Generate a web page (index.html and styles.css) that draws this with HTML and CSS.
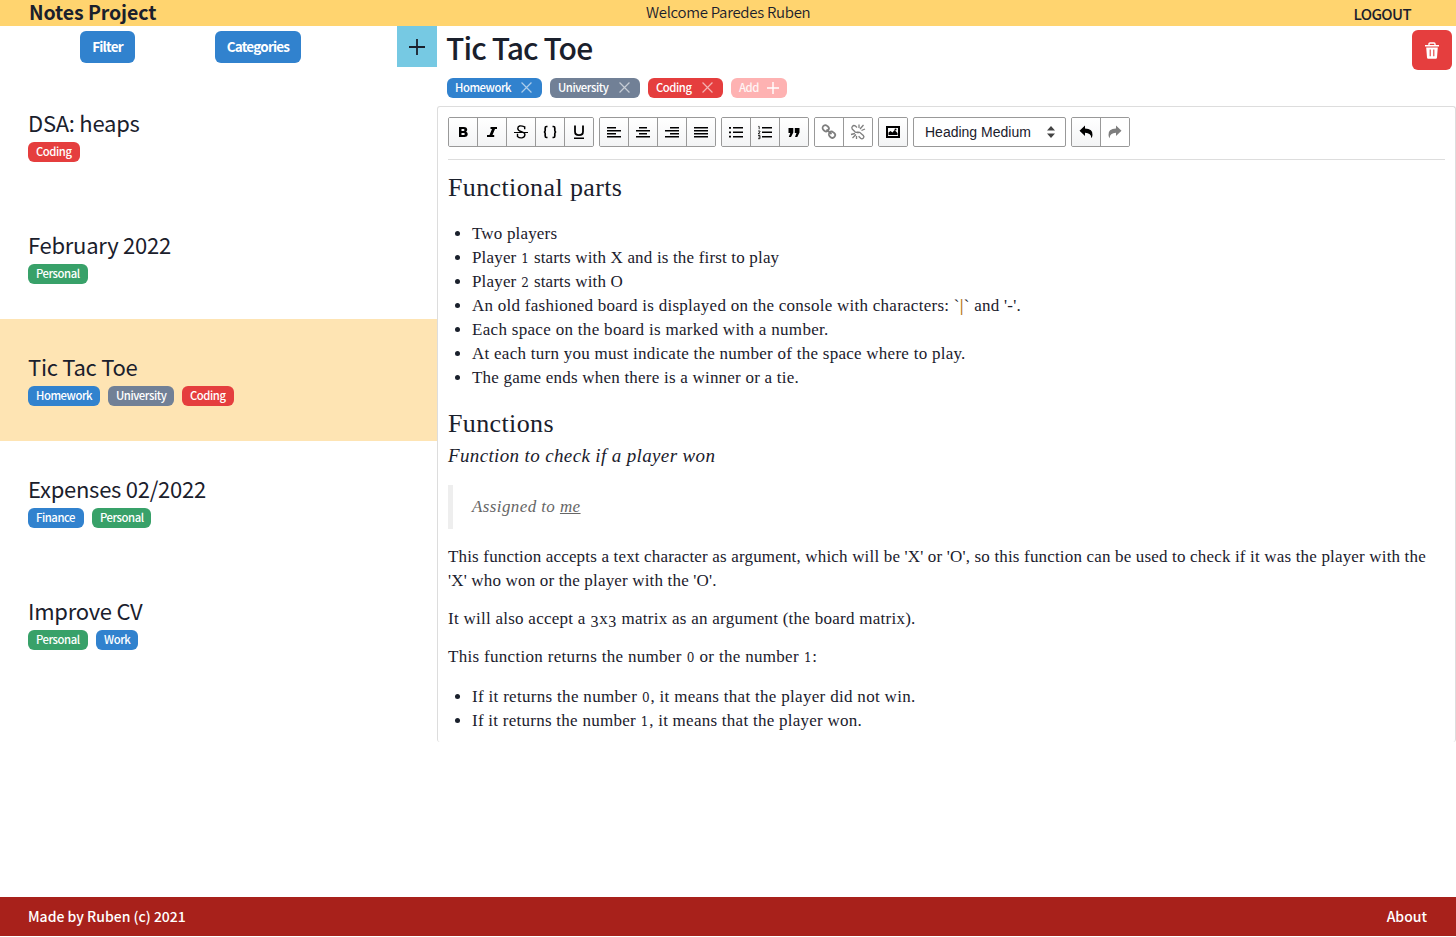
FILE: index.html
```html
<!DOCTYPE html>
<html lang="en">
<head>
<meta charset="utf-8">
<title>Notes Project</title>
<link rel="stylesheet" href="styles.css">
</head>
<body>
<div class="app">
  <header class="header">
    <h1 class="brand">Notes Project</h1>
    <span class="welcome">Welcome Paredes Ruben</span>
    <a class="logout">LOGOUT</a>
  </header>
  <div class="main">
    <aside class="sidebar">
      <div class="actions">
        <button class="btn filter">Filter</button>
        <button class="btn categories">Categories</button>
        <button class="new" aria-label="New note"><svg width="16" height="16" viewBox="0 0 16 16" stroke="#1a202c" stroke-width="1.8"><path d="M8 0v16M0 8h16"/></svg></button>
      </div>
      <ul class="notes">
        <li class="note"><h3 class="note-title">DSA: heaps</h3><div class="tags"><span class="tag red w-cod">Coding</span></div></li>
        <li class="note"><h3 class="note-title">February 2022</h3><div class="tags"><span class="tag green w-per">Personal</span></div></li>
        <li class="note active"><h3 class="note-title">Tic Tac Toe</h3><div class="tags"><span class="tag blue w-hom">Homework</span><span class="tag gray w-uni">University</span><span class="tag red w-cod">Coding</span></div></li>
        <li class="note"><h3 class="note-title">Expenses 02/2022</h3><div class="tags"><span class="tag blue w-fin">Finance</span><span class="tag green w-per last">Personal</span></div></li>
        <li class="note"><h3 class="note-title">Improve CV</h3><div class="tags"><span class="tag green w-per">Personal</span><span class="tag blue w-wor">Work</span></div></li>
      </ul>
    </aside>
    <section class="detail">
      <div class="detail-head">
        <h2 class="title">Tic Tac Toe</h2>
        <button class="delete" aria-label="Delete"><svg width="14" height="17" viewBox="0 0 14 17"><path d="M4 3.500V2q0-1 1-1h4q1 0 1 1v1.500" fill="none" stroke="#fff" stroke-width="1.400"/><path d="M0 3h14v1.500H0zM1.200 5.500h11.600L12 15.500q-.1 1.200-1.200 1.200H3.200Q2.100 16.700 2 15.500z" fill="#fff"/><path d="M5.200 7.500v6.800M8.800 7.500v6.800" stroke="#e53e3e" stroke-width="1.100"/></svg></button>
      </div>
      <div class="tags edit">
        <span class="tag blue e-hom">Homework<svg class="x" viewBox="0 0 10 10"><path d="M.5.5l9 9M9.500.5l-9 9"/></svg></span>
        <span class="tag gray e-uni">University<svg class="x" viewBox="0 0 10 10"><path d="M.5.5l9 9M9.500.5l-9 9"/></svg></span>
        <span class="tag red e-cod">Coding<svg class="x" viewBox="0 0 10 10"><path d="M.5.5l9 9M9.500.5l-9 9"/></svg></span>
        <span class="tag pink e-add">Add<svg class="plus" viewBox="0 0 12 12"><path d="M6 0v12M0 6h12"/></svg></span>
      </div>
      <div class="editor">
        <div class="toolbar">
          <div class="group">
            <button class="tool"><svg viewBox="0 0 18 18"><path fill-rule="evenodd" d="M5 4h5c3.600 0 4.100 3.700 2 4.700 2.900 1.200 2 5.300-1.500 5.300H5zM7.500 6v2h2c1.300 0 1.300-2 0-2zm0 4v2h2.300c1.400 0 1.400-2 0-2z"/></svg></button>
            <button class="tool"><svg viewBox="0 0 18 18"><path d="M7.500 4H14v2h-2L9.500 12h1.700v2H4v-2h2.500L9 6H7.500z"/></svg></button>
            <button class="tool"><svg viewBox="0 0 18 18" fill="none" stroke="#000"><path stroke-width="1.400" d="M12.700 6.200V3.800Q6 1.300 5.800 5.400c0 4 7.100 2.400 7.100 6.100 0 4.300-5.400 3.900-7.400 2v-2.700"/><path stroke-width="1.100" d="M2 9.500h14"/></svg></button>
            <button class="tool"><svg viewBox="0 0 18 18" fill="none" stroke="#000" stroke-width="1.700"><path d="M6.500 3.500H5.500Q4.200 3.500 4.200 5v2.500Q4.200 9 2.800 9q1.400 0 1.400 1.500V13q0 1.500 1.300 1.500h1M11.500 3.500h1q1.300 0 1.300 1.500v2.500q0 1.500 1.400 1.500-1.400 0-1.400 1.500V13q0 1.500-1.300 1.500h-1"/></svg></button>
            <button class="tool"><svg viewBox="0 0 18 18" fill="none" stroke="#000"><path stroke-width="1.800" d="M5 2.500v6q0 3.700 4 3.700t4-3.700v-6"/><path stroke-width="1.500" d="M4 15.200h10"/></svg></button>
          </div>
          <div class="group">
            <button class="tool"><svg viewBox="0 0 18 18"><path d="M2 4h9v1.500H2zm0 3h14v1.500H2zm0 3h9v1.500H2zm0 3h14v1.500H2z"/></svg></button>
            <button class="tool"><svg viewBox="0 0 18 18"><path d="M5 4h8v1.500H5zM2 7h14v1.500H2zm3 3h8v1.500H5zm-3 3h14v1.500H2z"/></svg></button>
            <button class="tool"><svg viewBox="0 0 18 18"><path d="M7 4h9v1.500H7zM2 7h14v1.500H2zm5 3h9v1.500H7zm-5 3h14v1.500H2z"/></svg></button>
            <button class="tool"><svg viewBox="0 0 18 18"><path d="M2 4h14v1.500H2zm0 3h14v1.500H2zm0 3h14v1.500H2zm0 3h14v1.500H2z"/></svg></button>
          </div>
          <div class="group">
            <button class="tool"><svg viewBox="0 0 18 18"><path d="M6 4h10v1.500H6zm0 4.500h10V10H6zm0 4.500h10v1.500H6zM2 4h2v1.800H2zm0 4.400h2v1.800H2zm0 4.400h2v1.800H2z"/></svg></button>
            <button class="tool"><svg viewBox="0 0 18 18"><path d="M6 4h10v1.500H6zm0 4.500h10V10H6zm0 4.500h10v1.500H6z"/><path fill="none" stroke="#000" stroke-width=".8" d="M2.300 3.400h.9v2.800M2 8h2v1l-2 1.800h2.200M2 12.500h2v3.200H2M2.500 14H4"/></svg></button>
            <button class="tool"><svg viewBox="0 0 18 18"><path d="M3.500 5h4.800v4.500L6 14H3.800l1.500-4H3.500zM9.800 5h4.700v4.500L12.300 14H10l1.500-4H9.800z"/></svg></button>
          </div>
          <div class="group">
            <button class="tool off"><svg viewBox="0 0 18 18" fill="none" stroke="#000" stroke-width="1.700"><rect x="2.500" y="2.500" width="6.500" height="5.500" rx="2.700" transform="rotate(40 5.700 5.200)"/><rect x="8.800" y="9" width="6.500" height="5.500" rx="2.700" transform="rotate(40 12 11.700)"/><path d="M6.500 6.500l5 4.500"/></svg></button>
            <button class="tool off"><svg viewBox="0 0 18 18" fill="none" stroke="#000" stroke-width="1.300"><path d="M8 4.500L6.200 2.800q-1.600-.8-2.700.4-1.200 1.200-.3 2.800l3 3q1.400.9 2.600-.2M8.500 10.200q.8-1.400 2.400-.7l3.400 3q1.300 1.500.1 2.600-1.400 1.300-2.800.2l-2-2M11 6l3.500-4M12.500 7.500L16 6M10 5V1.500M2 11.500l4-1M3.500 15L7 11.500M7.500 16v-3"/></svg></button>
          </div>
          <div class="group"><button class="tool"><svg viewBox="0 0 18 18"><path fill-rule="evenodd" d="M2 3h14v12H2zm2 2v8h10V5z"/><path d="M4.500 12V9.500l2-1.500 2 1.500 2-2.500 3 3v2z"/><circle cx="11.500" cy="6.500" r="1"/></svg></button></div>
          <div class="group select">Heading Medium<svg width="8" height="12" viewBox="0 0 8 12"><path d="M0 4.500L4 0l4 4.500zM0 7.500h8L4 12z" fill="#444"/></svg></div>
          <div class="group">
            <button class="tool"><svg viewBox="0 0 18 18"><path d="M8 2.500v3q8 .1 7.500 6.500-.1 1.900-1.200 3.200Q14.300 10 8 9.800V13L2.500 7.700z"/></svg></button>
            <button class="tool off"><svg viewBox="0 0 18 18"><path d="M10 2.500v3Q2 5.600 2.500 12q.1 1.900 1.200 3.200Q3.700 10 10 9.800V13l5.500-5.300z"/></svg></button>
          </div>
        </div>
        <article class="content">
          <h4 class="heading">Functional parts</h4>
          <ul class="list">
            <li>Two players</li>
            <li>Player <span class="num">1</span> starts with X and is the first to play</li>
            <li>Player <span class="num">2</span> starts with O</li>
            <li class="looser">An old fashioned board is displayed on the console with characters: `<span class="bar">|</span>` and '-'.</li>
            <li class="loosest">Each space on the board is marked with a number.</li>
            <li class="looser">At each turn you must indicate the number of the space where to play.</li>
            <li class="loose">The game ends when there is a winner or a tie.</li>
          </ul>
          <h4 class="heading second">Functions</h4>
          <h5 class="subheading">Function to check if a player won</h5>
          <blockquote class="quote">Assigned to <u>me</u></blockquote>
          <p class="para">This function accepts a text character as argument, which will be 'X' or 'O', so this function can be used to check if it was the player with the<br>'X' who won or the player with the 'O'.</p>
          <p class="para looser">It will also accept a <span class="num low">3</span>x<span class="num low">3</span> matrix as an argument (the board matrix).</p>
          <p class="para loosest">This function returns the number <span class="num">0</span> or the number <span class="num">1</span>:</p>
          <ul class="list end">
            <li class="loosest">If it returns the number <span class="num">0</span>, it means that the player did not win.</li>
            <li class="looser">If it returns the number <span class="num">1</span>, it means that the player won.</li>
          </ul>
        </article>
      </div>
    </section>
  </div>
  <footer class="footer"><span>Made by Ruben (c) 2021</span><a>About</a></footer>
</div>
</body>
</html>
```
FILE: styles.css
```css
* { box-sizing: border-box; margin: 0; padding: 0; }
body { background: #fff; color: #1a202c; font-family: "Noto Sans CJK SC", "Noto Sans", sans-serif; font-size: 16px; overflow: hidden; }
button { border: 0; font: inherit; color: inherit; }
ul { list-style: none; }
.app { height: 936px; display: flex; flex-direction: column; }
.header { height: 26px; flex: none; background: #ffd46f; display: grid; grid-template-columns: 617px 1fr auto; padding: 0 45px 0 29px; white-space: nowrap; }
.brand { font: 700 19.5px/24px "Noto Sans CJK SC", sans-serif; letter-spacing: -.1px; }
.welcome { font-size: 15px; font-weight: 350; line-height: 24px; letter-spacing: -.3px; }
.logout { font-weight: 500; font-size: 15px; line-height: 28px; letter-spacing: -.6px; }
.main { flex: 1; display: flex; min-height: 0; }
.sidebar { width: 437px; flex: none; }
.actions { height: 49px; display: flex; align-items: flex-start; padding-left: 80px; }
.btn { margin-top: 5px; height: 32px; border-radius: 6px; background: #3182ce; color: #fff; font-weight: 700; font-size: 13.5px; line-height: 30px; letter-spacing: -.8px; text-align: center; padding-bottom: 2px; }
.filter { width: 55px; }
.categories { width: 86px; margin-left: 80px; }
.new { width: 40px; height: 41px; margin-left: auto; background: #76c9e3; display: grid; place-items: center; }
.note { height: 122px; padding: 32px 28px 0; }
.note.active { background: #fee4b3; }
.note-title { font-size: 22px; font-weight: 400; line-height: 30px; height: 35px; letter-spacing: -.26px; white-space: nowrap; }
.tags { display: flex; gap: 8px; }
.tag { height: 20px; border-radius: 6px; color: #fff; font-size: 11.3px; font-weight: 500; line-height: 19px; letter-spacing: -.45px; padding-left: 8px; white-space: nowrap; }
.blue { background: #3182ce; }
.red { background: #e53e3e; }
.green { background: #38a169; }
.gray { background: #718096; }
.pink { background: #feb2b2; }
.w-cod { width: 52px; }
.w-per { width: 60px; }
.w-per.last { width: 59px; }
.w-hom { width: 72px; }
.w-uni { width: 66px; }
.w-fin { width: 56px; }
.w-wor { width: 42px; }
.detail { flex: 1; min-width: 0; }
.detail-head { height: 52px; display: flex; justify-content: space-between; padding: 4px 4px 0 9px; }
.title { font-size: 30px; font-weight: 500; line-height: 34px; letter-spacing: -.9px; }
.delete { width: 40px; height: 40px; border-radius: 6px; background: #e53e3e; display: grid; place-items: center; }
.edit { height: 28px; padding-left: 10px; }
.edit .tag { display: flex; align-items: center; justify-content: space-between; padding-right: 10px; padding-bottom: 1px; }
.e-hom { width: 95px; }
.e-uni { width: 90px; }
.e-cod { width: 75px; }
.e-add { width: 56px; }
.edit .e-add { padding-right: 8px; color: #fff5f5; }
.x { width: 11px; height: 11px; stroke: #fff; stroke-width: 1.1; opacity: .6; }
.plus { width: 12px; height: 12px; stroke: #fff; stroke-width: 1.4; }
.editor { height: 636px; border: 1px solid #ddd; border-bottom: 0; border-radius: 3px; padding: 10px; overflow: hidden; }
.toolbar { height: 43px; border-bottom: 1px solid #ddd; display: flex; gap: 5px; }
.group { height: 30px; display: flex; border: 1px solid #999; border-radius: 2px; background: #fff; overflow: hidden; }
.tool { width: 29px; height: 28px; display: grid; place-items: center; background: linear-gradient(#fff, #f3f4f5); border-right: 1px solid #999; }
.tool:last-child { width: 28px; border-right: 0; }
.tool svg { width: 18px; height: 18px; }
.tool.off { background: #fff; }
.tool.off svg { opacity: .5; }
.select { width: 153px; align-items: center; justify-content: space-between; padding: 0 10px 0 11px; font: 14px "Liberation Sans", Arial, sans-serif; color: #1a202c; }
.content { font-family: Georgia, "Liberation Serif", serif; font-size: 17px; line-height: 24px; letter-spacing: .17px; white-space: nowrap; }
.loose { letter-spacing: .22px; }
.looser { letter-spacing: .26px; }
.loosest { letter-spacing: .31px; }
.num { font: 12px/0 "DejaVu Serif", serif; padding: 0 .4px; }
.num.low { font: 16px/0 "Liberation Serif", serif; vertical-align: -3px; }
.heading { font-size: 26px; font-weight: 400; line-height: 32px; letter-spacing: .38px; margin-top: 12px; }
.list { list-style: disc; padding-left: 24px; margin-top: 18px; }
.bar { color: #b7791f; font-weight: 700; }
.heading.second { margin-top: 18px; }
.subheading { font-size: 19px; font-weight: 400; font-style: italic; line-height: 32px; letter-spacing: .36px; }
.quote { border-left: 5px solid #eee; color: #666; font-style: italic; height: 44px; line-height: 44px; letter-spacing: .4px; padding-left: 19px; margin: 13px 0 16px; }
.para { margin-bottom: 14px; }
.list.end { margin-top: 16px; }
.footer { height: 39px; flex: none; background: #a8211b; color: #fff; display: flex; justify-content: space-between; padding: 0 29px 0 28px; font-size: 14px; font-weight: 500; line-height: 39px; }
```
